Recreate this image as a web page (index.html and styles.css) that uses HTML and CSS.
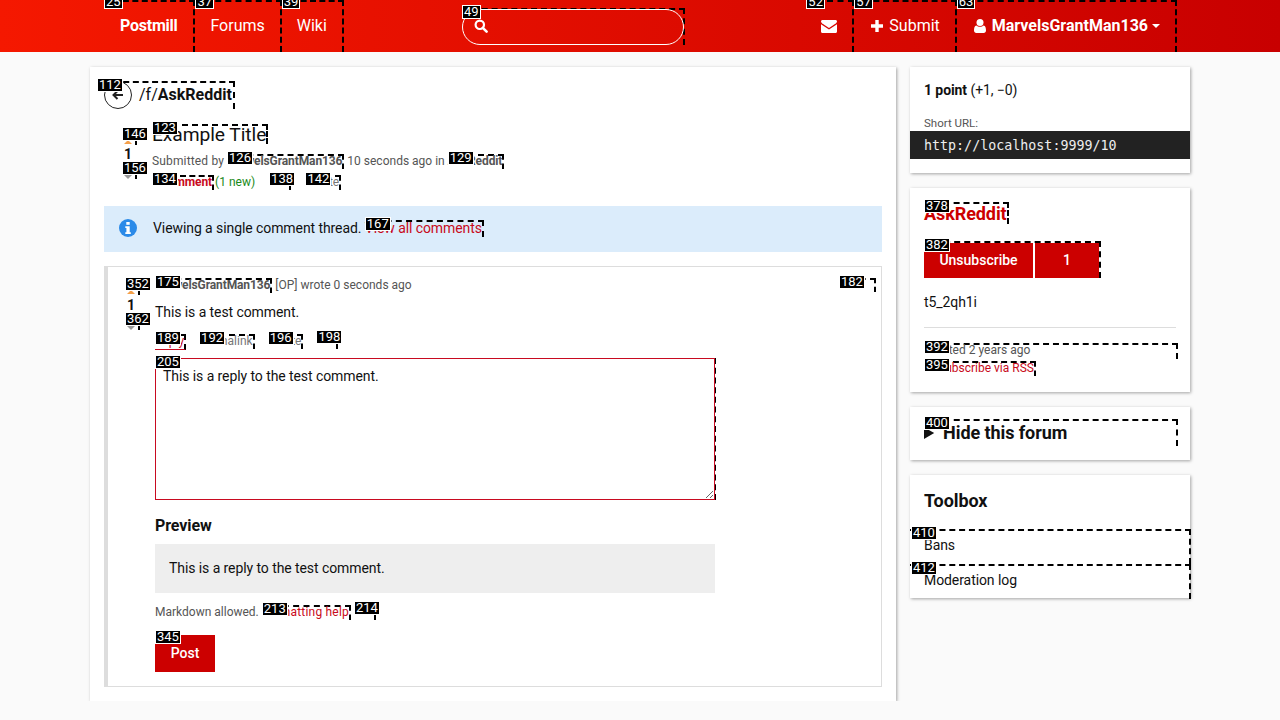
FILE: index.html
```html
<!DOCTYPE html>
<html lang="en">
<head>
<meta charset="UTF-8" />
<title>Example Title - /f/AskReddit</title>
<link rel="stylesheet" href="styles.css">
</head>
<body>
  <header class="navbar">
    <nav class="nav-inner">
      <a class="nav-link brand first mark" href="#"><span class="hint">25</span>Postmill</a>
      <a class="nav-link mark" href="#"><span class="hint">37</span>Forums</a>
      <a class="nav-link mark" href="#"><span class="hint">39</span>Wiki</a>

      <form class="search mark"><span class="hint">49</span>
        <svg class="search-icon" viewBox="0 0 14 14" width="14" height="14"><circle cx="5.8" cy="5.8" r="4.2" fill="none" stroke="#fff" stroke-width="2.2"/><path d="M8.8 8.8l3.8 3.8" stroke="#fff" stroke-width="2.6" stroke-linecap="round"/></svg>
      </form>

      <a class="nav-link nav-right mark" href="#"><span class="hint">52</span>
        <svg viewBox="0 0 16 13" width="16" height="13"><path d="M0 1.500C0 .6.6 0 1.500 0h13c.9 0 1.500.6 1.500 1.500 0 .8-.6 1.500-1.300 2L8 8 1.300 3.500C.6 3 0 2.300 0 1.500z" fill="#fff"/><path d="M0 4.200V11.500C0 12.400.6 13 1.500 13h13c.9 0 1.500-.6 1.500-1.500V4.200L8 9.500z" fill="#fff"/></svg>
      </a>
      <a class="nav-link mark" href="#"><span class="hint">57</span>
        <svg class="nav-icon" viewBox="0 0 12 12" width="12" height="12"><path d="M4.300 0h3.400v4.300H12v3.400H7.700V12H4.300V7.700H0V4.300h4.300z" fill="#fff"/></svg>Submit</a>
      <a class="nav-link brand mark" href="#"><span class="hint">63</span>
        <svg class="nav-icon" viewBox="0 0 12 14" width="12" height="14"><circle cx="6" cy="3.500" r="3.500" fill="#fff"/><path d="M2.300 6.400C3.300 7.300 4.600 7.800 6 7.800s2.700-.5 3.700-1.400C11.300 6.800 12 8.600 12 11.500 12 13 11 14 9.700 14H2.300C1 14 0 13 0 11.500 0 8.600.7 6.800 2.300 6.400z" fill="#fff"/></svg>MarvelsGrantMan136<span class="caret"></span></a>
    </nav>
  </header>

  <div class="page">
    <main class="card main-card">
      <a class="back-link mark" href="#"><span class="hint hint-out">112</span>
        <span class="back-circle">
          <svg viewBox="0 0 12 10" width="12" height="10"><path d="M11 5H2M5.500 1L1.500 5l4 4" fill="none" stroke="#222" stroke-width="2"/></svg>
        </span>
        <span>/f/<b>AskReddit</b></span>
      </a>

      <article class="submission">
        <div class="vote vote-sub">
          <button class="vote-btn mark" type="button"><span class="hint">146</span><span class="arrow arrow-up"></span></button>
          <span class="score">1</span>
          <button class="vote-btn mark" type="button"><span class="hint">156</span><span class="arrow arrow-down"></span></button>
        </div>
        <div class="submission-body">
          <h1 class="title"><a class="mark" href="#"><span class="hint">123</span>Example Title</a></h1>
          <p class="meta"><span class="by">Submitted by</span> <a class="user mark" href="#"><span class="hint">126</span>MarvelsGrantMan136</a> 10 seconds ago in <a class="user mark" href="#"><span class="hint">129</span>AskReddit</a></p>
          <ul class="links">
            <li><a class="comment-count mark" href="#"><span class="hint">134</span>1 comment</a><span class="new">(1 new)</span></li>
            <li><a class="mark" href="#"><span class="hint">138</span>Edit</a></li>
            <li><a class="mark" href="#"><span class="hint">142</span>Delete</a></li>
          </ul>
        </div>
      </article>

      <div class="alert">
        <svg class="alert-icon" viewBox="0 0 18 18" width="18" height="18"><circle cx="9" cy="9" r="9" fill="#2b8ae8"/><rect x="7.300" y="3" width="3.400" height="2.800" fill="#fff"/><path d="M6.300 7.300h4.400v5.900h1.100v1.800H6.300v-1.800h1.100V9.100H6.300z" fill="#fff"/></svg>
        <span>Viewing a single comment thread. <a class="mark" href="#"><span class="hint">167</span>View all comments</a></span>
      </div>

      <section class="comment">
        <div class="vote vote-comment">
          <button class="vote-btn mark" type="button"><span class="hint">352</span><span class="arrow arrow-up"></span></button>
          <span class="score">1</span>
          <button class="vote-btn mark" type="button"><span class="hint">362</span><span class="arrow arrow-down"></span></button>
        </div>
        <div class="comment-body">
          <div class="comment-head">
            <p class="meta"><a class="user mark" href="#"><span class="hint">175</span>MarvelsGrantMan136</a> [OP] wrote 0 seconds ago</p>
            <a class="collapse mark" href="#"><span class="hint">182</span></a>
          </div>
          <p class="comment-text">This is a test comment.</p>
          <ul class="links comment-links">
            <li><a class="reply mark" href="#"><span class="hint">189</span>Reply</a></li>
            <li><a class="mark" href="#"><span class="hint">192</span>Permalink</a></li>
            <li><a class="mark" href="#"><span class="hint">196</span>Delete</a></li>
            <li><a class="mark empty" href="#"><span class="hint">198</span></a></li>
          </ul>
          <div class="reply-box mark"><span class="hint">205</span>
            <textarea class="reply-input">This is a reply to the test comment.</textarea>
          </div>
          <h3 class="preview-title">Preview</h3>
          <div class="preview">This is a reply to the test comment.</div>
          <p class="help">Markdown allowed. <a class="mark" href="#"><span class="hint">213</span>Formatting help</a> <a class="mark empty" href="#"><span class="hint">214</span></a></p>
          <button class="btn post mark" type="button"><span class="hint">345</span>Post</button>
        </div>
      </section>
    </main>

    <aside class="sidebar">
      <section class="card side-card short-card">
        <p class="points"><b>1 point</b> (+1, −0)</p>
        <p class="small-label">Short URL:</p>
        <pre class="short-url">http://localhost:9999/10</pre>
      </section>

      <section class="card side-card forum-card">
        <h2 class="side-title"><a class="forum-name mark" href="#"><span class="hint">378</span>AskReddit</a></h2>
        <div class="sub-buttons mark"><span class="hint">382</span>
          <button class="btn sub-btn" type="button">Unsubscribe</button>
          <button class="btn sub-count" type="button">1</button>
        </div>
        <p class="forum-id">t5_2qh1i</p>
        <hr class="rule">
        <p class="created mark"><span class="hint">392</span>Created 2 years ago</p>
        <p class="rss"><a class="mark" href="#"><span class="hint">395</span>Subscribe via RSS</a></p>
      </section>

      <section class="card side-card hide-card">
        <details class="hide-forum mark">
          <summary><span class="hint">400</span>Hide this forum</summary>
        </details>
      </section>

      <section class="card toolbox">
        <h2 class="side-title">Toolbox</h2>
        <a class="tool-link mark" href="#"><span class="hint">410</span>Bans</a>
        <a class="tool-link mark" href="#"><span class="hint">412</span>Moderation log</a>
      </section>
    </aside>
  </div>
</body>
</html>
```

FILE: styles.css
```css
* {
  box-sizing: border-box;
}
body {
  margin: 0;
  background: #fafafa;
  color: #111;
  font-family: Roboto, sans-serif;
  font-size: 14px;
  line-height: 20px;
  letter-spacing: -0.08px;
}
a {
  color: #c80a20;
  text-decoration: none;
}
p, ul, h1, h2, h3, pre {
  margin: 0;
  padding: 0;
}

/* keyboard hint overlay */
.mark {
  position: relative;
  border-top: 2px dashed #000;
  border-right: 2px dashed #000;
}
.hint {
  position: absolute;
  left: 0;
  top: -5px;
  z-index: 5;
  padding: 0 1px;
  border: 1px solid #fff;
  background: #000;
  color: #fff;
  font: 400 13px/12px Roboto, sans-serif;
  letter-spacing: 0;
  white-space: nowrap;
}
.hint-out {
  left: -7px;
}

/* navbar */
.navbar {
  height: 52px;
  background: linear-gradient(90deg, #f51800 0%, #c80000 100%);
}
.nav-inner {
  display: flex;
  width: 1073px;
  height: 52px;
  margin-left: 104px;
}
.nav-link {
  display: flex;
  align-items: center;
  padding: 0 15px 2px;
  color: #fff;
  font-size: 16px;
  letter-spacing: 0;
}
.nav-link .hint {
  top: -7px;
}
.brand {
  font-weight: 700;
}
.first {
  padding-left: 16px;
  padding-right: 16px;
  letter-spacing: -0.25px;
}
.nav-right {
  margin-left: auto;
}
.nav-icon {
  margin: 0 6px 0 2px;
}
.caret {
  width: 0;
  height: 0;
  margin-left: 4px;
  border: 4px solid transparent;
  border-top-color: #fff;
  border-bottom: 0;
}
.search {
  width: 223px;
  height: 37px;
  margin: 8px 0 0 118px;
}
.search::before {
  content: "";
  position: absolute;
  inset: -1px -1px 0 0;
  border: 1px solid #fff;
  border-radius: 18px;
}
.search-icon {
  position: absolute;
  left: 12px;
  top: 9px;
}

/* layout */
.page {
  display: flex;
  align-items: flex-start;
  gap: 14px;
  width: 1100px;
  margin: 15px 0 0 90px;
}
.card {
  background: #fff;
  box-shadow: 1px 1px 3px rgba(0, 0, 0, 0.35);
}
.main-card {
  width: 806px;
  padding: 14px;
}
.sidebar {
  display: flex;
  flex-direction: column;
  gap: 15px;
  width: 280px;
}

/* back link */
.back-link {
  display: inline-flex;
  align-items: center;
  gap: 7px;
  height: 28px;
  padding-right: 1px;
  color: #111;
  font-size: 16px;
  letter-spacing: 0;
}
.back-link > span:not(.hint) {
  margin-top: -3px;
}
.back-circle {
  display: flex;
  align-items: center;
  justify-content: center;
  width: 28px;
  height: 28px;
  border: 1px solid #222;
  border-radius: 50%;
}

/* submission */
.submission {
  display: flex;
  margin-top: 16px;
}
.vote {
  display: flex;
  flex-direction: column;
  align-items: flex-start;
}
.vote-sub {
  width: 30px;
  margin-left: 18px;
  padding-top: 5px;
}
.vote-btn {
  display: block;
  width: 15px;
  height: 15px;
  padding: 0;
  border-left: 0;
  border-bottom: 0;
  background: none;
}
.arrow {
  position: absolute;
  left: 2px;
  width: 0;
  height: 0;
  border: 4px solid transparent;
}
.arrow-up {
  bottom: 1px;
  border-top: 0;
  border-bottom-color: #f5a04a;
}
.arrow-down {
  bottom: 0;
  border-bottom: 0;
  border-top-color: #999;
}
.score {
  display: block;
  margin-left: 2px;
  font-weight: 700;
  line-height: 19px;
}
.title {
  height: 20px;
  font-size: 19.25px;
  font-weight: 400;
  line-height: 20px;
}
.title a {
  display: inline-block;
  margin-top: -1px;
  color: #111;
  line-height: 18px;
}
.meta {
  color: #555;
  font-size: 12px;
  line-height: 20px;
  letter-spacing: 0;
}
.submission-body .meta {
  margin-top: 6px;
}
.by {
  letter-spacing: 0.15px;
}
.meta a, .links a, .help a, .rss a {
  display: inline-block;
  padding-bottom: 2px;
  line-height: 11px;
}
.user {
  color: #555;
  font-weight: 700;
  letter-spacing: -0.1px;
}
.meta a.user {
  color: #555;
}
.links {
  display: flex;
  gap: 14px;
  list-style: none;
  font-size: 12px;
  line-height: 20px;
  letter-spacing: 0;
}
.submission-body .links {
  margin-top: 1px;
}
.links a {
  color: #777;
}
.links .comment-count {
  color: #c80a20;
  font-weight: 700;
  letter-spacing: -0.1px;
}
.new {
  margin-left: 1px;
  color: #1a8a1a;
}

/* alert */
.alert {
  display: flex;
  align-items: center;
  gap: 16px;
  height: 46px;
  margin-top: 14px;
  padding: 0 0 2px 15px;
  background: #dbecfb;
}
.alert a {
  display: inline-block;
  padding-bottom: 3px;
  line-height: 12px;
}

/* comment */
.comment {
  display: flex;
  height: 421px;
  margin-top: 14px;
  border: 1px solid #ddd;
  border-left: 4px solid #ddd;
}
.vote-comment {
  width: 30px;
  margin-left: 17px;
  padding-top: 13px;
}
.vote-comment .score {
  margin: 0 0 0 2px;
  line-height: 20px;
}
.comment-body {
  flex: 1;
  padding-top: 8px;
}
.comment-head {
  display: flex;
  justify-content: space-between;
}
.collapse {
  display: block;
  width: 37px;
  height: 14px;
  margin: 3px 5px 0 0;
}
.comment-text {
  margin-top: 7px;
}
.comment-links {
  gap: 13px;
  margin-top: 9px;
}
.links a.reply {
  border-bottom: 1px solid #c80a20;
  color: #c80a20;
}
.meta a.empty, .links a.empty, .help a.empty {
  width: 22px;
  height: 16px;
  margin-top: 2px;
  vertical-align: top;
}
.reply-box {
  width: 561px;
  height: 142px;
  margin-top: 7px;
}
.reply-input {
  display: block;
  width: 560px;
  height: 142px;
  margin-top: -2px;
  padding: 8px 7px;
  border: 1px solid #c80a20;
  border-radius: 0;
  outline: none;
  color: #111;
  font: 14px/18px Roboto, sans-serif;
  letter-spacing: -0.08px;
}
.preview-title {
  margin-top: 16px;
  font-size: 16px;
  line-height: 20px;
}
.preview {
  width: 560px;
  height: 49px;
  margin-top: 8px;
  padding: 14px;
  background: #eee;
}
.help {
  margin-top: 9px;
  color: #555;
  font-size: 12px;
  letter-spacing: 0;
}
.help a {
  letter-spacing: 0.2px;
}
.btn {
  padding: 0 0 2px;
  border: 0;
  background: #c00;
  color: #fff;
  font: 500 14px/20px Roboto, sans-serif;
}
.post {
  display: block;
  width: 60px;
  height: 37px;
  margin-top: 13px;
}

/* sidebar */
.side-card {
  padding: 14px;
}
.points {
  line-height: 18px;
}
.small-label {
  margin-top: 17px;
  color: #555;
  font-size: 11.5px;
  line-height: 14px;
  letter-spacing: 0;
}
.short-url {
  height: 28px;
  margin: 1px -14px 0;
  padding: 0 14px;
  background: #222;
  color: #eee;
  font: 13.33px/29px "DejaVu Sans Mono", monospace;
  letter-spacing: 0;
}
.short-card {
  height: 106px;
}
.forum-card {
  height: 204px;
}
.side-title {
  font-size: 18px;
  line-height: 24px;
}
.forum-name {
  display: inline-block;
  color: #c00;
  line-height: 20px;
}
.sub-buttons {
  display: flex;
  gap: 2px;
  width: 177px;
  height: 37px;
  margin-top: 15px;
}
.sub-btn {
  width: 109px;
}
.sub-count {
  width: 64px;
}
.forum-id {
  margin-top: 14px;
}
.rule {
  height: 1px;
  margin: 15px 0 0;
  border: 0;
  background: #ddd;
}
.created {
  height: 16px;
  margin: 15px -2px 0 0;
  color: #555;
  font-size: 12px;
  line-height: 11px;
  letter-spacing: 0;
}
.rss {
  margin-top: 2px;
  font-size: 12px;
  line-height: 14px;
  letter-spacing: 0;
}
.rss a {
  padding-left: 14px;
}
.hide-card {
  height: 53px;
  padding-top: 12px;
}
.hide-forum {
  height: 27px;
  margin-right: -2px;
}
.hide-forum summary {
  font-size: 18px;
  font-weight: 700;
  line-height: 24px;
}
.toolbox {
  height: 123px;
  padding-top: 14px;
}
.toolbox .side-title {
  padding-left: 14px;
}
.tool-link {
  display: block;
  height: 35px;
  margin-right: -1px;
  padding: 4px 14px;
  color: #111;
}
.tool-link .hint {
  left: 1px;
}
.toolbox .side-title + .tool-link {
  margin-top: 16px;
}
```
